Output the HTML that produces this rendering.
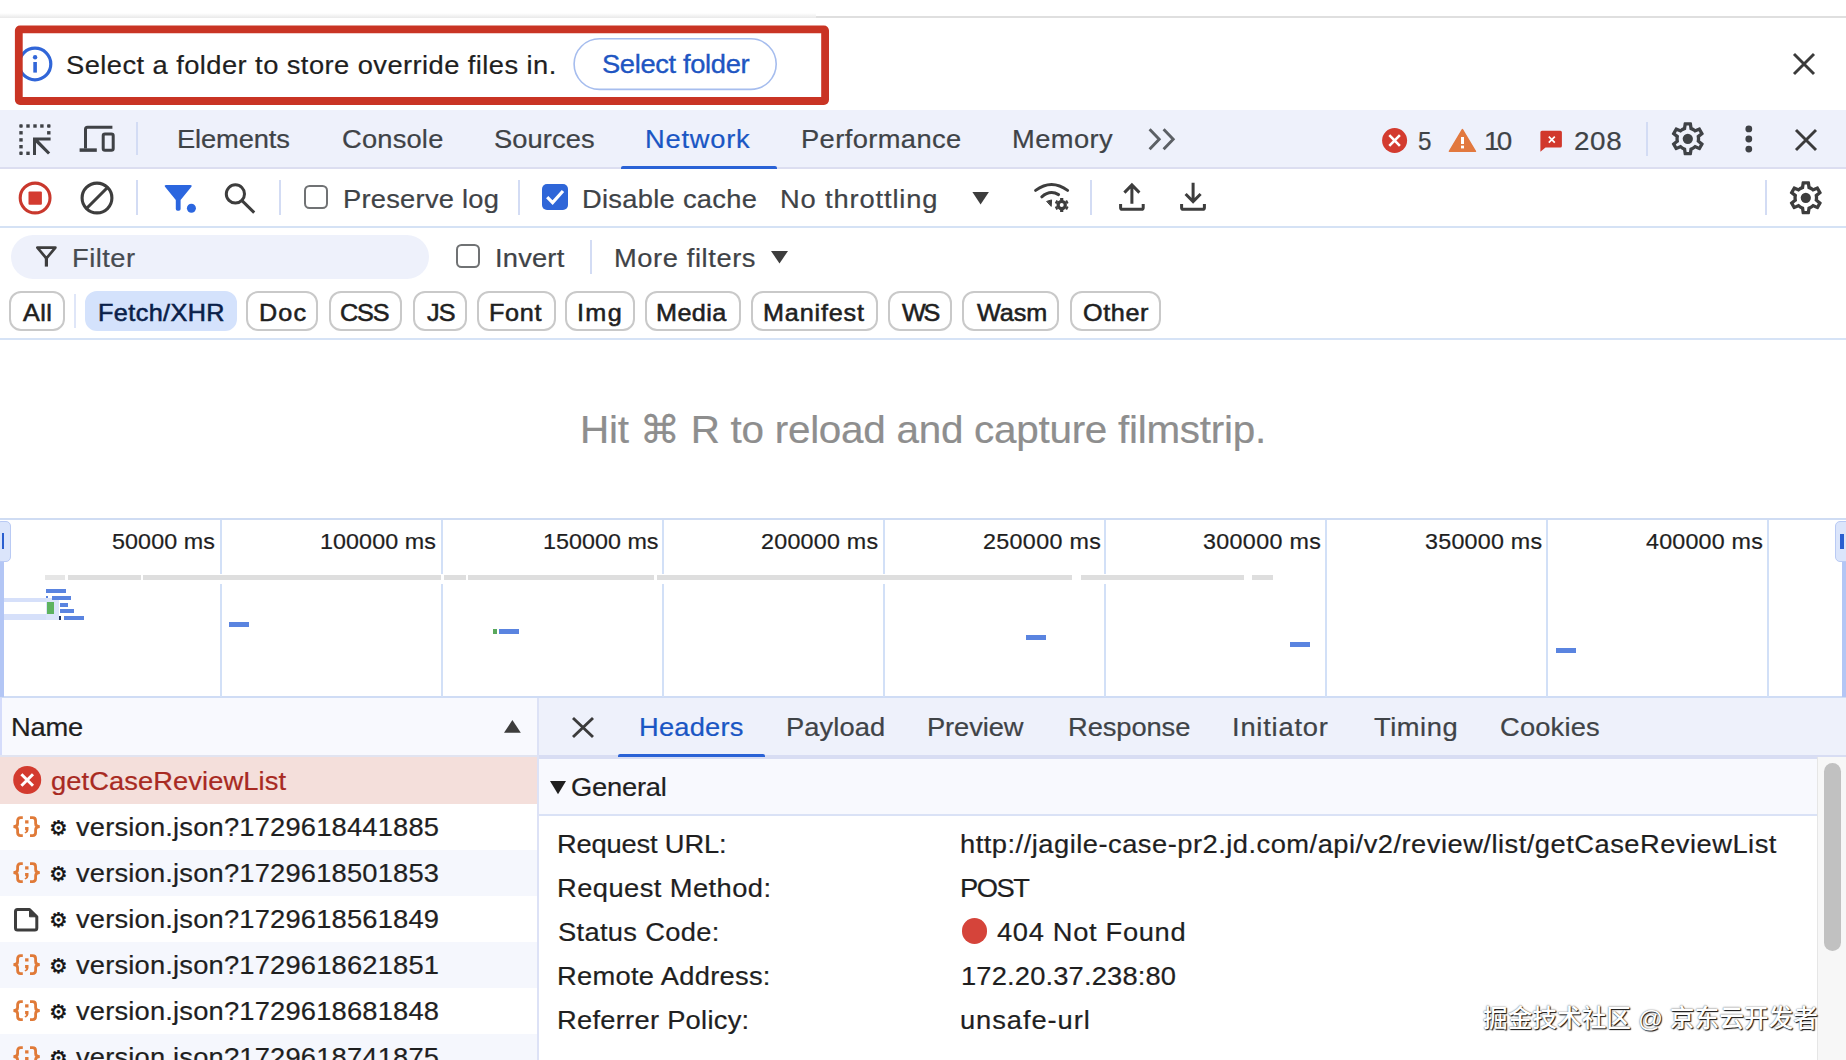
<!DOCTYPE html>
<html lang="en">
<head>
<meta charset="utf-8">
<title>DevTools - Network</title>
<style>
html,body{margin:0;padding:0;background:#fff;}
body{width:1846px;height:1060px;position:relative;overflow:hidden;font-family:"Liberation Sans",sans-serif;}
.a{position:absolute;}
.t{position:absolute;line-height:1;white-space:pre;transform-origin:0 0;}
svg{position:absolute;overflow:visible;}
.sep{position:absolute;width:2px;background:#d3dcf4;}
.chip{position:absolute;top:291.2px;height:36.3px;border:2px solid #c9c9c9;border-radius:12px;background:#fff;}
.gl{position:absolute;top:519.5px;height:177px;width:2px;background:#d2e0f7;}
.bar{position:absolute;background:#5a84e0;}
.row{position:absolute;left:0;width:537px;height:46px;}
.cb{position:absolute;width:20px;height:20px;border:2px solid #707274;border-radius:5.5px;background:#fff;}
</style>
</head>
<body>
<!-- top edge -->
<div class="a" style="left:0;top:12.5px;width:816px;height:5.4px;background:linear-gradient(#fff,#e9e9e9)"></div>
<div class="a" style="left:816px;top:15.9px;width:1030px;height:2px;background:#dfdfdf"></div>

<!-- infobar -->
<div id="infobar" class="a" style="left:0;top:18px;width:1846px;height:92px;background:#fff">
  <svg style="left:16.8px;top:27.9px" width="36" height="36" viewBox="0 0 36 36"><circle cx="18" cy="18" r="15.8" fill="none" stroke="#3166d8" stroke-width="3.2"/><rect x="16.3" y="16" width="3.6" height="10.6" fill="#3166d8"/><circle cx="18.1" cy="11.2" r="2.2" fill="#3166d8"/></svg>
  <svg style="left:570px;top:18px" width="212" height="58" viewBox="0 0 212 58"><rect x="4.1" y="2.8" width="202.1" height="50.6" rx="25.3" fill="#fff" stroke="#a6bdee" stroke-width="1.6"/></svg>
  <svg style="left:1793px;top:35px" width="22" height="22" viewBox="0 0 22 22"><path d="M1 1 L21 21 M21 1 L1 21" stroke="#3b3b3b" stroke-width="2.9" fill="none"/></svg>
</div>
<!-- red annotation rectangle -->
<svg style="left:0;top:0" width="846" height="110" viewBox="0 0 846 110"><rect x="18.8" y="29.3" width="806.3" height="71.7" rx="1.2" fill="none" stroke="#c93424" stroke-width="7.8"/></svg>

<!-- main tab bar -->
<div id="tabbar" class="a" style="left:0;top:110px;width:1846px;height:57px;background:#eef1fb;border-bottom:2px solid #dcdef0">
  <!-- inspect icon -->
  <svg style="left:19px;top:13.5px" width="33" height="32" viewBox="0 0 33 32" fill="#3f4246">
    <rect x="0.3" y="0.3" width="3.4" height="3.4" rx="0.8"/><rect x="7.3" y="0.3" width="3.4" height="3.4"/><rect x="14.3" y="0.3" width="3.4" height="3.4"/><rect x="21.2" y="0.3" width="3.4" height="3.4"/><rect x="28.1" y="0.3" width="3.4" height="3.4" rx="0.8"/>
    <rect x="0.3" y="7.1" width="3.4" height="3.4"/><rect x="0.3" y="14.2" width="3.4" height="3.4"/><rect x="0.3" y="21" width="3.4" height="3.4"/><rect x="0.3" y="27.6" width="3.4" height="3.4" rx="0.8"/>
    <rect x="28.1" y="7.1" width="3.4" height="3.4"/><rect x="7.3" y="27.6" width="3.4" height="3.4"/>
    <path d="M14 13.5 H31.6 V16.6 H19.6 L31.2 28.4 L29 30.6 L17 18.8 V31 H14 Z"/>
  </svg>
  <!-- device icon -->
  <svg style="left:79px;top:15px" width="37" height="28" viewBox="0 0 37 28" fill="none" stroke="#3f4246">
    <path d="M33.4 2.3 H8.5 Q6.5 2.3 6.5 4.3 V23.5" stroke-width="3"/>
    <path d="M0.6 25.1 H17.8" stroke-width="3.5"/>
    <rect x="24.2" y="9" width="10" height="16.3" rx="1.8" stroke-width="3"/>
  </svg>
  <div class="sep" style="left:136.3px;top:12px;height:33px"></div>
  <!-- network tab underline -->
  <div class="a" style="left:620.7px;top:55.5px;width:156.3px;height:3px;background:#2a62d6;border-radius:2px 2px 0 0"></div>
  <!-- chevrons -->
  <svg style="left:1148px;top:18px" width="28" height="23" viewBox="0 0 28 23" fill="none" stroke="#5c6065" stroke-width="2.9"><path d="M1.6 1.2 L11.2 11.2 L1.6 21.2 M15.6 1.2 L25.2 11.2 L15.6 21.2"/></svg>
  <!-- error count icon -->
  <svg style="left:1382px;top:17.8px" width="26" height="26" viewBox="0 0 26 26"><circle cx="12.6" cy="12.5" r="12.5" fill="#d33b2f"/><path d="M7.3 7.2 L17.9 17.8 M17.9 7.2 L7.3 17.8" stroke="#fff" stroke-width="2.6" fill="none"/></svg>
  <!-- warning icon -->
  <svg style="left:1448px;top:18px" width="29" height="25" viewBox="0 0 29 25"><path d="M14.4 1.6 L27.4 23.3 H1.4 Z" fill="#e2793f" stroke="#e2793f" stroke-width="1.6" stroke-linejoin="round"/><rect x="13" y="9" width="3" height="7" fill="#fff"/><rect x="13" y="17.6" width="3" height="2.8" fill="#fff"/></svg>
  <!-- issues icon -->
  <svg style="left:1540px;top:20px" width="23" height="23" viewBox="0 0 23 23"><path d="M2 0.8 H20.4 Q21.9 0.8 21.9 2.3 V16 Q21.9 17.5 20.4 17.5 H5.5 L0.4 21.8 V2.3 Q0.4 0.8 2 0.8 Z" fill="#d1382c"/><path d="M8.8 6.6 L14.8 12.6 M14.8 6.6 L8.8 12.6" stroke="#fff" stroke-width="1.7" fill="none"/></svg>
  <div class="sep" style="left:1645.5px;top:12px;height:33.5px"></div>
  <!-- settings gear -->
  <svg style="left:1668.2px;top:9.2px" width="39.6" height="39.6" viewBox="0 0 24 24" fill="#3f4246"><path d="M19.43 12.98c.04-.32.07-.64.07-.98 0-.34-.03-.66-.07-.98l2.11-1.65c.19-.15.24-.42.12-.64l-2-3.46c-.09-.16-.26-.25-.44-.25-.06 0-.12.01-.17.03l-2.49 1c-.52-.4-1.08-.73-1.69-.98l-.38-2.65C14.46 2.18 14.25 2 14 2h-4c-.25 0-.46.18-.49.42l-.38 2.65c-.61.25-1.17.59-1.69.98l-2.49-1c-.06-.02-.12-.03-.18-.03-.17 0-.34.09-.43.25l-2 3.46c-.13.22-.07.49.12.64l2.11 1.65c-.04.32-.07.65-.07.98 0 .33.03.66.07.98l-2.11 1.65c-.19.15-.24.42-.12.64l2 3.46c.09.16.26.25.44.25.06 0 .12-.01.17-.03l2.49-1c.52.4 1.08.73 1.69.98l.38 2.65c.03.24.24.42.49.42h4c.25 0 .46-.18.49-.42l.38-2.65c.61-.25 1.17-.59 1.69-.98l2.49 1c.06.02.12.03.18.03.17 0 .34-.09.43-.25l2-3.46c.12-.22.07-.49-.12-.64l-2.11-1.65zm-1.98-1.71c.04.31.05.52.05.73 0 .21-.02.43-.05.73l-.14 1.13.89.7 1.08.84-.7 1.21-1.27-.51-1.04-.42-.9.68c-.43.32-.84.56-1.25.73l-1.06.43-.16 1.13-.2 1.35h-1.4l-.19-1.35-.16-1.13-1.06-.43c-.43-.18-.83-.41-1.23-.71l-.91-.7-1.06.43-1.27.51-.7-1.21 1.08-.84.89-.7-.14-1.13c-.03-.31-.05-.54-.05-.74s.02-.43.05-.73l.14-1.13-.89-.7-1.08-.84.7-1.21 1.27.51 1.04.42.9-.68c.43-.32.84-.56 1.25-.73l1.06-.43.16-1.13.2-1.35h1.39l.19 1.35.16 1.13 1.06.43c.43.18.83.41 1.23.71l.91.7 1.06-.43 1.27-.51.7 1.21-1.07.85-.89.7.14 1.13z"/><circle cx="12" cy="12" r="3.1"/></svg>
  <!-- kebab -->
  <svg style="left:1744px;top:15px" width="10" height="28" viewBox="0 0 10 28" fill="#3f4246"><circle cx="4.8" cy="3.9" r="3.4"/><circle cx="4.8" cy="14" r="3.4"/><circle cx="4.8" cy="24.1" r="3.4"/></svg>
  <svg style="left:1795px;top:18.5px" width="22" height="22" viewBox="0 0 22 22"><path d="M1 1 L21 21 M21 1 L1 21" stroke="#3b3b3b" stroke-width="2.9" fill="none"/></svg>
</div>

<!-- network toolbar -->
<div id="toolbar" class="a" style="left:0;top:169px;width:1846px;height:57px;background:#fff;border-bottom:2px solid #d5e2f5">
  <svg style="left:18px;top:12px" width="35" height="35" viewBox="0 0 35 35"><circle cx="17.1" cy="17" r="14.9" fill="none" stroke="#c9382d" stroke-width="3.1"/><rect x="10.5" y="10.4" width="13.4" height="13.3" rx="1" fill="#d43b30"/></svg>
  <svg style="left:80px;top:12px" width="35" height="35" viewBox="0 0 35 35" fill="none" stroke="#3d3d3d" stroke-width="3.1"><circle cx="17" cy="17" r="14.9"/><path d="M6.5 27.5 L27.5 6.5"/></svg>
  <div class="sep" style="left:136.3px;top:11px;height:34.5px"></div>
  <svg style="left:164px;top:15px" width="34" height="30" viewBox="0 0 34 30" fill="#2b66df"><path d="M2.2 1 H26.2 Q28.6 1 27.2 3 L16.6 16 V25 Q16.6 26.8 14.8 26.8 H13.6 Q11.8 26.8 11.8 25 V16 L1.2 3 Q-0.2 1 2.2 1 Z"/><circle cx="27.4" cy="24.3" r="4.5"/></svg>
  <svg style="left:224px;top:13.5px" width="32" height="31" viewBox="0 0 32 31" fill="none" stroke="#3d3d3d" stroke-width="3"><circle cx="11.4" cy="10.9" r="9.1"/><path d="M18 17.6 L30.2 29.6"/></svg>
  <div class="sep" style="left:279.3px;top:11px;height:34.5px"></div>
  <div class="cb" style="left:304.2px;top:16.2px"></div>
  <div class="sep" style="left:518px;top:11px;height:34.5px"></div>
  <div class="a" style="left:542.2px;top:15.2px;width:26px;height:25.4px;border-radius:5px;background:#2f66d8"></div>
  <svg style="left:542.2px;top:15.2px" width="26" height="26" viewBox="0 0 26 26"><path d="M5.2 13.2 L10.6 18.6 L21 7" stroke="#fff" stroke-width="3.2" fill="none"/></svg>
  <svg style="left:972px;top:23.4px" width="17" height="13" viewBox="0 0 17 13"><path d="M0.4 0 H16.9 L8.6 12.4 Z" fill="#3d3d3d"/></svg>
  <!-- network conditions -->
  <svg style="left:1033px;top:12px" width="38" height="32" viewBox="0 0 38 32" fill="none" stroke="#3d3d3d" stroke-width="3" stroke-linecap="round"><path d="M2.6 9.4 Q18.5 -2.4 34.6 9.4"/><path d="M8.8 15.8 Q17 8.6 25.6 13.6"/><path d="M14 20.3 L18.6 18.9 L18.2 25 Z" fill="#3d3d3d" stroke-width="1" stroke-linejoin="round"/><g transform="translate(28.7,24)"><circle r="3.6" stroke-width="3.2"/><path d="M0 -7 V-5 M0 7 V5 M-6.1 -3.5 L-4.3 -2.5 M6.1 3.5 L4.3 2.5 M-6.1 3.5 L-4.3 2.5 M6.1 -3.5 L4.3 -2.5" stroke-width="3.2" stroke-linecap="butt"/></g></svg>
  <div class="sep" style="left:1090px;top:11px;height:34.5px"></div>
  <svg style="left:1118px;top:13px" width="29" height="30" viewBox="0 0 29 30" fill="none" stroke="#3d3d3d" stroke-width="3"><path d="M13.9 21.8 V2.6 M6.4 10.6 L13.9 3 L21.4 10.6"/><path d="M2.6 22 V25.7 Q2.6 27.3 4.2 27.3 H23.6 Q25.2 27.3 25.2 25.7 V22"/></svg>
  <svg style="left:1179px;top:13px" width="29" height="30" viewBox="0 0 29 30" fill="none" stroke="#3d3d3d" stroke-width="3"><path d="M14.1 0.8 V20 M6.6 12 L14.1 19.6 L21.6 12"/><path d="M2.6 22 V25.7 Q2.6 27.3 4.2 27.3 H23.8 Q25.4 27.3 25.4 25.7 V22"/></svg>
  <div class="sep" style="left:1765px;top:11px;height:34.5px"></div>
  <svg style="left:1786.2px;top:9.2px" width="39.6" height="39.6" viewBox="0 0 24 24" fill="#3d3d3d"><path d="M19.43 12.98c.04-.32.07-.64.07-.98 0-.34-.03-.66-.07-.98l2.11-1.65c.19-.15.24-.42.12-.64l-2-3.46c-.09-.16-.26-.25-.44-.25-.06 0-.12.01-.17.03l-2.49 1c-.52-.4-1.08-.73-1.69-.98l-.38-2.65C14.46 2.18 14.25 2 14 2h-4c-.25 0-.46.18-.49.42l-.38 2.65c-.61.25-1.17.59-1.69.98l-2.49-1c-.06-.02-.12-.03-.18-.03-.17 0-.34.09-.43.25l-2 3.46c-.13.22-.07.49.12.64l2.11 1.65c-.04.32-.07.65-.07.98 0 .33.03.66.07.98l-2.11 1.65c-.19.15-.24.42-.12.64l2 3.46c.09.16.26.25.44.25.06 0 .12-.01.17-.03l2.49-1c.52.4 1.08.73 1.69.98l.38 2.65c.03.24.24.42.49.42h4c.25 0 .46-.18.49-.42l.38-2.65c.61-.25 1.17-.59 1.69-.98l2.49 1c.06.02.12.03.18.03.17 0 .34-.09.43-.25l2-3.46c.12-.22.07-.49-.12-.64l-2.11-1.65zm-1.98-1.71c.04.31.05.52.05.73 0 .21-.02.43-.05.73l-.14 1.13.89.7 1.08.84-.7 1.21-1.27-.51-1.04-.42-.9.68c-.43.32-.84.56-1.25.73l-1.06.43-.16 1.13-.2 1.35h-1.4l-.19-1.35-.16-1.13-1.06-.43c-.43-.18-.83-.41-1.23-.71l-.91-.7-1.06.43-1.27.51-.7-1.21 1.08-.84.89-.7-.14-1.13c-.03-.31-.05-.54-.05-.74s.02-.43.05-.73l.14-1.13-.89-.7-1.08-.84.7-1.21 1.27.51 1.04.42.9-.68c.43-.32.84-.56 1.25-.73l1.06-.43.16-1.13.2-1.35h1.39l.19 1.35.16 1.13 1.06.43c.43.18.83.41 1.23.71l.91.7 1.06-.43 1.27-.51.7 1.21-1.07.85-.89.7.14 1.13z"/><circle cx="12" cy="12" r="3.1"/></svg>
</div>

<!-- filter row -->
<div id="filterrow" class="a" style="left:0;top:228.6px;width:1846px;height:57px;background:#fff">
  <div class="a" style="left:11px;top:6.6px;width:418px;height:43.4px;border-radius:22px;background:#eef1fb"></div>
  <svg style="left:35px;top:17.5px" width="24" height="22" viewBox="0 0 24 22" fill="none" stroke="#3d3d3d" stroke-width="2.7" stroke-linejoin="round"><path d="M2.4 1.6 H20.4 L11.4 12.4 Z"/><path d="M11.4 11 V20.6" stroke-width="3.2"/></svg>
  <div class="cb" style="left:456.3px;top:15.5px"></div>
  <div class="sep" style="left:589.8px;top:11px;height:34.5px"></div>
  <svg style="left:771px;top:22.7px" width="17" height="13" viewBox="0 0 17 13"><path d="M0 0 H17 L8.5 12.4 Z" fill="#3d3d3d"/></svg>
</div>

<!-- type chips -->
<div id="chips" class="a" style="left:0;top:0;width:0;height:0">
  <div class="chip" style="left:9.2px;width:51.6px"></div>
  <div class="sep" style="left:74.2px;top:294.2px;height:34px;background:#dfe6f8"></div>
  <div class="chip" style="left:85px;width:147.8px;border-color:#d4e2fc;background:#d4e2fc"></div>
  <div class="chip" style="left:246.2px;width:67.8px"></div>
  <div class="chip" style="left:328.5px;width:69.9px"></div>
  <div class="chip" style="left:412.5px;width:50.5px"></div>
  <div class="chip" style="left:477px;width:75.0px"></div>
  <div class="chip" style="left:565px;width:65.6px"></div>
  <div class="chip" style="left:644.6px;width:92.8px"></div>
  <div class="chip" style="left:750.5px;width:123.5px"></div>
  <div class="chip" style="left:887.5px;width:60.8px"></div>
  <div class="chip" style="left:962.4px;width:93.1px"></div>
  <div class="chip" style="left:1069.6px;width:87.7px"></div>
</div>
<div class="a" style="left:0;top:338px;width:1846px;height:2px;background:#d6e3f6"></div>
<!-- overview timeline -->
<div id="overview" class="a" style="left:0;top:0;width:0;height:0">
  <div class="a" style="left:0;top:518px;width:1846px;height:2px;background:#cfdcf3"></div>
  <div class="a" style="left:0;top:695.8px;width:1846px;height:2px;background:#cfdcf5"></div>
  <div class="gl" style="left:220px"></div><div class="gl" style="left:441px"></div><div class="gl" style="left:662px"></div><div class="gl" style="left:883px"></div><div class="gl" style="left:1104px"></div><div class="gl" style="left:1325px"></div><div class="gl" style="left:1546px"></div><div class="gl" style="left:1767px"></div>
  <!-- grey request track -->
  <div class="a" style="left:43px;top:573.5px;width:1232px;height:10px;background:#fff"></div>
  <div class="a" style="left:44.8px;top:574.6px;width:20px;height:5.4px;background:#e6e6e6"></div>
  <div class="a" style="left:67.8px;top:574.6px;width:73px;height:5.4px;background:#dedede"></div>
  <div class="a" style="left:142.8px;top:574.6px;width:298px;height:5.4px;background:#dedede"></div>
  <div class="a" style="left:443.5px;top:574.6px;width:22px;height:5.4px;background:#dedede"></div>
  <div class="a" style="left:467.5px;top:574.6px;width:186px;height:5.4px;background:#dedede"></div>
  <div class="a" style="left:656.5px;top:574.6px;width:415.5px;height:5.4px;background:#dedede"></div>
  <div class="a" style="left:1080.5px;top:574.6px;width:163.5px;height:5.4px;background:#dedede"></div>
  <div class="a" style="left:1252px;top:574.6px;width:21px;height:5.4px;background:#dedede"></div>
  <!-- selection window handles -->
  <div class="a" style="left:0;top:561px;width:3.7px;height:136px;background:#b3c6f5"></div>
  <div class="a" style="left:1842px;top:561px;width:4px;height:136px;background:#b3c6f5"></div>
  <div class="a" style="left:4px;top:598.4px;width:44px;height:3.6px;background:#d6e0fa"></div>
  <div class="a" style="left:4px;top:614px;width:44px;height:5.6px;background:#d6e0fa"></div>
  <div class="a" style="left:-4px;top:520.5px;width:13px;height:39px;border:1.5px solid #b9caf4;border-radius:5px;background:#dbe5fb"></div>
  <div class="a" style="left:2px;top:533px;width:2px;height:15.6px;background:#2a5fcf"></div>
  <div class="a" style="left:1835.3px;top:520.5px;width:14px;height:39px;border:1.5px solid #b9caf4;border-radius:5px;background:#dbe5fb"></div>
  <div class="a" style="left:1840px;top:533.7px;width:3.6px;height:15px;background:#2a5fcf"></div>
  <!-- request bars -->
  <div class="bar" style="left:45.6px;top:589.2px;width:20.4px;height:3.6px"></div>
  <div class="a" style="left:46px;top:598px;width:13px;height:22px;background:#dbe5fa"></div>
  <div class="bar" style="left:46px;top:596px;width:2px;height:2px"></div>
  <div class="bar" style="left:51.5px;top:596px;width:19.5px;height:3.6px"></div>
  <div class="bar" style="left:59.8px;top:603.4px;width:8.2px;height:3.4px"></div>
  <div class="bar" style="left:59.8px;top:609.4px;width:14.2px;height:3.6px"></div>
  <div class="bar" style="left:64.3px;top:616px;width:20px;height:4px"></div>
  <div class="a" style="left:59.4px;top:616px;width:2px;height:4px;background:#22345e"></div>
  <div class="a" style="left:47px;top:602.3px;width:7.2px;height:11.4px;background:#5db35f"></div>
  <div class="bar" style="left:229.3px;top:622px;width:20px;height:5px"></div>
  <div class="a" style="left:492.8px;top:628.8px;width:4.5px;height:5px;background:#5aa85c"></div>
  <div class="bar" style="left:499px;top:628.8px;width:20.2px;height:5px"></div>
  <div class="bar" style="left:1025.5px;top:635px;width:20.5px;height:5px"></div>
  <div class="bar" style="left:1289.5px;top:641.5px;width:20.5px;height:5px"></div>
  <div class="bar" style="left:1556px;top:648.3px;width:20px;height:5px"></div>
</div>
<!-- request list (left) -->
<div id="reqlist" class="a" style="left:0;top:697.8px;width:537px;height:363px;background:#fff">
  <div class="a" style="left:0;top:0;width:537px;height:57px;background:#f8f9fe;border-bottom:2px solid #e1e4f1"></div>
  <div class="a" style="left:0;top:0;width:2px;height:57px;background:#d5dcfb"></div>
  <svg style="left:504.3px;top:22.2px" width="17" height="13" viewBox="0 0 17 13"><path d="M8.4 0 L16.8 12.8 H0 Z" fill="#3d3d3d"/></svg>
  <div class="row" style="top:59px;height:46.9px;background:#f4dfdb"></div>
  <div class="row" style="top:152.5px;background:#f5f7fd"></div>
  <div class="row" style="top:244.5px;background:#f5f7fd"></div>
  <div class="row" style="top:336.5px;background:#f5f7fd"></div>
  <svg style="left:12.5px;top:68.7px" width="29" height="29" viewBox="0 0 29 29"><circle cx="14.2" cy="14" r="14" fill="#d33b2f"/><path d="M8.4 8.2 L20 19.8 M20 8.2 L8.4 19.8" stroke="#fff" stroke-width="3" fill="none"/></svg>
</div>
<!-- row icons -->
<svg style="left:12px;top:816px" width="30" height="22"><g fill="none" stroke="#e07a38" stroke-width="2.8"><path d="M10.8 1.7 H8.6 Q5.6 1.7 5.6 4.7 V7.4 Q5.6 10.6 1.4 10.6 Q5.6 10.6 5.6 13.8 V16.6 Q5.6 19.6 8.6 19.6 H10.8"/><path d="M18 1.7 H20.6 Q23.6 1.7 23.6 4.7 V7.4 Q23.6 10.6 27.8 10.6 Q23.6 10.6 23.6 13.8 V16.6 Q23.6 19.6 20.6 19.6 H18"/><rect x="13.1" y="4.3" width="3.4" height="3.2" fill="#e07a38" stroke="none"/><path d="M13.1 11 H16.5 V14 Q16.5 16.4 13.6 17.6 L12.4 16.4 Q14.4 15.4 14.2 14.2 H13.1 Z" fill="#e07a38" stroke="none"/></g></svg>
<svg style="left:12px;top:862px" width="30" height="22"><g fill="none" stroke="#e07a38" stroke-width="2.8"><path d="M10.8 1.7 H8.6 Q5.6 1.7 5.6 4.7 V7.4 Q5.6 10.6 1.4 10.6 Q5.6 10.6 5.6 13.8 V16.6 Q5.6 19.6 8.6 19.6 H10.8"/><path d="M18 1.7 H20.6 Q23.6 1.7 23.6 4.7 V7.4 Q23.6 10.6 27.8 10.6 Q23.6 10.6 23.6 13.8 V16.6 Q23.6 19.6 20.6 19.6 H18"/><rect x="13.1" y="4.3" width="3.4" height="3.2" fill="#e07a38" stroke="none"/><path d="M13.1 11 H16.5 V14 Q16.5 16.4 13.6 17.6 L12.4 16.4 Q14.4 15.4 14.2 14.2 H13.1 Z" fill="#e07a38" stroke="none"/></g></svg>
<svg style="left:14.2px;top:907.6px" width="25" height="24"><g fill="none" stroke="#3d3d3d" stroke-width="3" stroke-linejoin="round"><path d="M3.5 1.5 H15.5 L22.8 8.8 V20 Q22.8 22 20.8 22 H3.5 Q1.5 22 1.5 20 V3.5 Q1.5 1.5 3.5 1.5 Z"/><path d="M15.5 1.5 V8.8 H22.8 Z" fill="#3d3d3d" stroke-width="1"/></g></svg>
<svg style="left:12px;top:954px" width="30" height="22"><g fill="none" stroke="#e07a38" stroke-width="2.8"><path d="M10.8 1.7 H8.6 Q5.6 1.7 5.6 4.7 V7.4 Q5.6 10.6 1.4 10.6 Q5.6 10.6 5.6 13.8 V16.6 Q5.6 19.6 8.6 19.6 H10.8"/><path d="M18 1.7 H20.6 Q23.6 1.7 23.6 4.7 V7.4 Q23.6 10.6 27.8 10.6 Q23.6 10.6 23.6 13.8 V16.6 Q23.6 19.6 20.6 19.6 H18"/><rect x="13.1" y="4.3" width="3.4" height="3.2" fill="#e07a38" stroke="none"/><path d="M13.1 11 H16.5 V14 Q16.5 16.4 13.6 17.6 L12.4 16.4 Q14.4 15.4 14.2 14.2 H13.1 Z" fill="#e07a38" stroke="none"/></g></svg>
<svg style="left:12px;top:1000px" width="30" height="22"><g fill="none" stroke="#e07a38" stroke-width="2.8"><path d="M10.8 1.7 H8.6 Q5.6 1.7 5.6 4.7 V7.4 Q5.6 10.6 1.4 10.6 Q5.6 10.6 5.6 13.8 V16.6 Q5.6 19.6 8.6 19.6 H10.8"/><path d="M18 1.7 H20.6 Q23.6 1.7 23.6 4.7 V7.4 Q23.6 10.6 27.8 10.6 Q23.6 10.6 23.6 13.8 V16.6 Q23.6 19.6 20.6 19.6 H18"/><rect x="13.1" y="4.3" width="3.4" height="3.2" fill="#e07a38" stroke="none"/><path d="M13.1 11 H16.5 V14 Q16.5 16.4 13.6 17.6 L12.4 16.4 Q14.4 15.4 14.2 14.2 H13.1 Z" fill="#e07a38" stroke="none"/></g></svg>
<svg style="left:12px;top:1046px" width="30" height="22"><g fill="none" stroke="#e07a38" stroke-width="2.8"><path d="M10.8 1.7 H8.6 Q5.6 1.7 5.6 4.7 V7.4 Q5.6 10.6 1.4 10.6 Q5.6 10.6 5.6 13.8 V16.6 Q5.6 19.6 8.6 19.6 H10.8"/><path d="M18 1.7 H20.6 Q23.6 1.7 23.6 4.7 V7.4 Q23.6 10.6 27.8 10.6 Q23.6 10.6 23.6 13.8 V16.6 Q23.6 19.6 20.6 19.6 H18"/><rect x="13.1" y="4.3" width="3.4" height="3.2" fill="#e07a38" stroke="none"/><path d="M13.1 11 H16.5 V14 Q16.5 16.4 13.6 17.6 L12.4 16.4 Q14.4 15.4 14.2 14.2 H13.1 Z" fill="#e07a38" stroke="none"/></g></svg>

<!-- splitter -->
<div class="a" style="left:537px;top:697.8px;width:2px;height:363px;background:#dde2f6"></div>

<!-- details panel (right) -->
<div id="details" class="a" style="left:539px;top:697.8px;width:1307px;height:363px;background:#fff">
  <div class="a" style="left:0;top:0;width:1307px;height:56.8px;background:#eef1fb;border-bottom:4px solid #d8ddf3"></div>
  <svg style="left:33px;top:19.4px" width="22" height="21" viewBox="0 0 22 21"><path d="M1 1 L21 20 M21 1 L1 20" stroke="#3b3b3b" stroke-width="2.9" fill="none"/></svg>
  <div class="a" style="left:79px;top:56.2px;width:146.7px;height:3px;background:#2a62d6;border-radius:2px 2px 0 0"></div>
  <div class="a" style="left:0;top:60.8px;width:1278px;height:55.5px;background:#f8f9fe;border-bottom:2px solid #dae2f6"></div>
  <svg style="left:11px;top:83.3px" width="16" height="14" viewBox="0 0 16 14"><path d="M0 0 H16 L8 13.3 Z" fill="#1f1f1f"/></svg>
  <div class="a" style="left:422.5px;top:220.7px;width:25.5px;height:25.5px;border-radius:50%;background:#d5443a"></div>
  <!-- scrollbar -->
  <div class="a" style="left:1278px;top:59.6px;width:29px;height:304px;background:#f7f7f7;border-left:1.5px solid #e6e6e6"></div>
  <div class="a" style="left:1284.8px;top:64.8px;width:17.2px;height:188px;border-radius:9px;background:#c1c1c1"></div>
</div>

<span class="t" style="left:66.2px;top:52.0px;font-size:26.00px;color:#1f1f1f;letter-spacing:0.417px;transform:scaleX(1.0500);-webkit-text-stroke:0.22px currentColor;">Select a folder to store override files in.</span>
<span class="t" style="left:601.5px;top:50.5px;font-size:26.00px;color:#2055c2;letter-spacing:-0.329px;transform:scaleX(1.0500);-webkit-text-stroke:0.35px currentColor;">Select folder</span>
<span class="t" style="left:177.2px;top:126.1px;font-size:26.00px;color:#3f4347;letter-spacing:-0.122px;transform:scaleX(1.0500);-webkit-text-stroke:0.22px currentColor;">Elements</span>
<span class="t" style="left:342.4px;top:126.1px;font-size:26.00px;color:#3f4347;letter-spacing:0.183px;transform:scaleX(1.0500);-webkit-text-stroke:0.22px currentColor;">Console</span>
<span class="t" style="left:493.8px;top:126.1px;font-size:26.00px;color:#3f4347;letter-spacing:0.079px;transform:scaleX(1.0500);-webkit-text-stroke:0.22px currentColor;">Sources</span>
<span class="t" style="left:644.7px;top:126.1px;font-size:26.00px;color:#1a56c4;letter-spacing:0.722px;transform:scaleX(1.0500);-webkit-text-stroke:0.22px currentColor;">Network</span>
<span class="t" style="left:801.2px;top:126.1px;font-size:26.00px;color:#3f4347;letter-spacing:0.371px;transform:scaleX(1.0500);-webkit-text-stroke:0.22px currentColor;">Performance</span>
<span class="t" style="left:1012.2px;top:126.1px;font-size:26.00px;color:#3f4347;letter-spacing:0.400px;transform:scaleX(1.0500);-webkit-text-stroke:0.22px currentColor;">Memory</span>
<span class="t" style="left:1417.9px;top:128.1px;font-size:26.50px;color:#3f4347;transform:scaleX(0.9154);-webkit-text-stroke:0.22px currentColor;">5</span>
<span class="t" style="left:1483.9px;top:128.1px;font-size:26.50px;color:#3f4347;letter-spacing:-2.619px;transform:scaleX(1.0500);-webkit-text-stroke:0.22px currentColor;">10</span>
<span class="t" style="left:1573.5px;top:128.1px;font-size:26.50px;color:#3f4347;letter-spacing:0.571px;transform:scaleX(1.0500);-webkit-text-stroke:0.22px currentColor;">208</span>
<span class="t" style="left:343.4px;top:186.1px;font-size:26.00px;color:#3f4347;letter-spacing:0.234px;transform:scaleX(1.0500);-webkit-text-stroke:0.22px currentColor;">Preserve log</span>
<span class="t" style="left:581.7px;top:186.1px;font-size:26.00px;color:#3f4347;letter-spacing:0.270px;transform:scaleX(1.0500);-webkit-text-stroke:0.22px currentColor;">Disable cache</span>
<span class="t" style="left:779.8px;top:186.1px;font-size:26.00px;color:#3f4347;letter-spacing:0.813px;transform:scaleX(1.0500);-webkit-text-stroke:0.22px currentColor;">No throttling</span>
<span class="t" style="left:72.4px;top:245.2px;font-size:26.00px;color:#474b50;letter-spacing:0.448px;transform:scaleX(1.0500);-webkit-text-stroke:0.22px currentColor;">Filter</span>
<span class="t" style="left:495.4px;top:245.2px;font-size:26.00px;color:#3f4347;letter-spacing:0.181px;transform:scaleX(1.0500);-webkit-text-stroke:0.22px currentColor;">Invert</span>
<span class="t" style="left:613.6px;top:245.2px;font-size:26.00px;color:#3f4347;letter-spacing:0.563px;transform:scaleX(1.0500);-webkit-text-stroke:0.22px currentColor;">More filters</span>
<span class="t" style="left:23.4px;top:300.8px;font-size:24.00px;color:#1f1f1f;letter-spacing:0.357px;transform:scaleX(1.0500);-webkit-text-stroke:0.55px currentColor;">All</span>
<span class="t" style="left:98.3px;top:300.8px;font-size:24.00px;color:#0a1f4a;letter-spacing:0.393px;transform:scaleX(1.0500);-webkit-text-stroke:0.55px currentColor;">Fetch/XHR</span>
<span class="t" style="left:258.7px;top:300.8px;font-size:24.00px;color:#1f1f1f;letter-spacing:1.048px;transform:scaleX(1.0500);-webkit-text-stroke:0.55px currentColor;">Doc</span>
<span class="t" style="left:340.4px;top:300.8px;font-size:24.00px;color:#1f1f1f;letter-spacing:-1.048px;transform:scaleX(1.0500);-webkit-text-stroke:0.55px currentColor;">CSS</span>
<span class="t" style="left:426.5px;top:300.8px;font-size:24.00px;color:#1f1f1f;letter-spacing:-0.810px;transform:scaleX(1.0500);-webkit-text-stroke:0.55px currentColor;">JS</span>
<span class="t" style="left:489.4px;top:300.8px;font-size:24.00px;color:#1f1f1f;letter-spacing:0.635px;transform:scaleX(1.0500);-webkit-text-stroke:0.55px currentColor;">Font</span>
<span class="t" style="left:577.4px;top:300.8px;font-size:24.00px;color:#1f1f1f;letter-spacing:1.262px;transform:scaleX(1.0500);-webkit-text-stroke:0.55px currentColor;">Img</span>
<span class="t" style="left:656.4px;top:300.8px;font-size:24.00px;color:#1f1f1f;letter-spacing:0.381px;transform:scaleX(1.0500);-webkit-text-stroke:0.55px currentColor;">Media</span>
<span class="t" style="left:763.4px;top:300.8px;font-size:24.00px;color:#1f1f1f;letter-spacing:0.782px;transform:scaleX(1.0500);-webkit-text-stroke:0.55px currentColor;">Manifest</span>
<span class="t" style="left:902.1px;top:300.8px;font-size:24.00px;color:#1f1f1f;letter-spacing:-2.286px;transform:scaleX(1.0500);-webkit-text-stroke:0.55px currentColor;">WS</span>
<span class="t" style="left:977.0px;top:300.8px;font-size:24.00px;color:#1f1f1f;letter-spacing:-0.095px;transform:scaleX(1.0500);-webkit-text-stroke:0.55px currentColor;">Wasm</span>
<span class="t" style="left:1082.5px;top:300.8px;font-size:24.00px;color:#1f1f1f;letter-spacing:0.560px;transform:scaleX(1.0500);-webkit-text-stroke:0.55px currentColor;">Other</span>
<span class="t" style="left:580.4px;top:411.2px;font-size:38.50px;color:#8e8e8e;letter-spacing:-0.253px;transform:scaleX(1.0500);font-family:'Liberation Sans','DejaVu Sans',sans-serif;-webkit-text-stroke:0.22px currentColor;">Hit ⌘ R to reload and capture filmstrip.</span>
<span class="t" style="left:112.2px;top:531.0px;font-size:22.20px;color:#1f1f1f;letter-spacing:0.082px;transform:scaleX(1.0500);-webkit-text-stroke:0.22px currentColor;">50000 ms</span>
<span class="t" style="left:320.4px;top:531.0px;font-size:22.20px;color:#1f1f1f;letter-spacing:0.077px;transform:scaleX(1.0500);-webkit-text-stroke:0.22px currentColor;">100000 ms</span>
<span class="t" style="left:542.6px;top:531.0px;font-size:22.20px;color:#1f1f1f;letter-spacing:0.030px;transform:scaleX(1.0500);-webkit-text-stroke:0.22px currentColor;">150000 ms</span>
<span class="t" style="left:761.0px;top:531.0px;font-size:22.20px;color:#1f1f1f;letter-spacing:0.226px;transform:scaleX(1.0500);-webkit-text-stroke:0.22px currentColor;">200000 ms</span>
<span class="t" style="left:982.5px;top:531.0px;font-size:22.20px;color:#1f1f1f;letter-spacing:0.310px;transform:scaleX(1.0500);-webkit-text-stroke:0.22px currentColor;">250000 ms</span>
<span class="t" style="left:1202.5px;top:531.0px;font-size:22.20px;color:#1f1f1f;letter-spacing:0.310px;transform:scaleX(1.0500);-webkit-text-stroke:0.22px currentColor;">300000 ms</span>
<span class="t" style="left:1425.4px;top:531.0px;font-size:22.20px;color:#1f1f1f;letter-spacing:0.226px;transform:scaleX(1.0500);-webkit-text-stroke:0.22px currentColor;">350000 ms</span>
<span class="t" style="left:1645.5px;top:531.0px;font-size:22.20px;color:#1f1f1f;letter-spacing:0.185px;transform:scaleX(1.0500);-webkit-text-stroke:0.22px currentColor;">400000 ms</span>
<span class="t" style="left:11.2px;top:714.2px;font-size:26.00px;color:#1f1f1f;letter-spacing:-0.222px;transform:scaleX(1.0500);-webkit-text-stroke:0.22px currentColor;">Name</span>
<span class="t" style="left:51.4px;top:768.1px;font-size:26.00px;color:#a82a22;letter-spacing:0.080px;transform:scaleX(1.0500);-webkit-text-stroke:0.22px currentColor;">getCaseReviewList</span>
<span class="t" style="left:75.6px;top:813.6px;font-size:26.00px;color:#1f1f1f;letter-spacing:0.179px;transform:scaleX(1.0500);-webkit-text-stroke:0.22px currentColor;">version.json?1729618441885</span>
<span class="t" style="left:75.6px;top:859.6px;font-size:26.00px;color:#1f1f1f;letter-spacing:0.179px;transform:scaleX(1.0500);-webkit-text-stroke:0.22px currentColor;">version.json?1729618501853</span>
<span class="t" style="left:75.6px;top:905.6px;font-size:26.00px;color:#1f1f1f;letter-spacing:0.179px;transform:scaleX(1.0500);-webkit-text-stroke:0.22px currentColor;">version.json?1729618561849</span>
<span class="t" style="left:75.6px;top:951.6px;font-size:26.00px;color:#1f1f1f;letter-spacing:0.179px;transform:scaleX(1.0500);-webkit-text-stroke:0.22px currentColor;">version.json?1729618621851</span>
<span class="t" style="left:75.6px;top:997.6px;font-size:26.00px;color:#1f1f1f;letter-spacing:0.179px;transform:scaleX(1.0500);-webkit-text-stroke:0.22px currentColor;">version.json?1729618681848</span>
<span class="t" style="left:75.6px;top:1043.6px;font-size:26.00px;color:#1f1f1f;letter-spacing:0.179px;transform:scaleX(1.0500);-webkit-text-stroke:0.22px currentColor;">version.json?1729618741875</span>
<span class="t" style="left:639.1px;top:714.0px;font-size:26.00px;color:#1a56c4;letter-spacing:0.198px;transform:scaleX(1.0500);-webkit-text-stroke:0.22px currentColor;">Headers</span>
<span class="t" style="left:786.4px;top:714.0px;font-size:26.00px;color:#3f4347;letter-spacing:0.079px;transform:scaleX(1.0500);-webkit-text-stroke:0.22px currentColor;">Payload</span>
<span class="t" style="left:927.0px;top:714.0px;font-size:26.00px;color:#3f4347;letter-spacing:-0.103px;transform:scaleX(1.0500);-webkit-text-stroke:0.22px currentColor;">Preview</span>
<span class="t" style="left:1067.8px;top:714.0px;font-size:26.00px;color:#3f4347;letter-spacing:-0.082px;transform:scaleX(1.0500);-webkit-text-stroke:0.22px currentColor;">Response</span>
<span class="t" style="left:1232.2px;top:714.0px;font-size:26.00px;color:#3f4347;letter-spacing:0.756px;transform:scaleX(1.0500);-webkit-text-stroke:0.22px currentColor;">Initiator</span>
<span class="t" style="left:1373.5px;top:714.0px;font-size:26.00px;color:#3f4347;letter-spacing:0.524px;transform:scaleX(1.0500);-webkit-text-stroke:0.22px currentColor;">Timing</span>
<span class="t" style="left:1499.9px;top:714.0px;font-size:26.00px;color:#3f4347;letter-spacing:0.159px;transform:scaleX(1.0500);-webkit-text-stroke:0.22px currentColor;">Cookies</span>
<span class="t" style="left:571.2px;top:773.7px;font-size:26.00px;color:#1f1f1f;letter-spacing:-0.206px;transform:scaleX(1.0500);-webkit-text-stroke:0.22px currentColor;">General</span>
<span class="t" style="left:556.6px;top:831.0px;font-size:26.00px;color:#1f1f1f;letter-spacing:-0.169px;transform:scaleX(1.0500);-webkit-text-stroke:0.22px currentColor;">Request URL:</span>
<span class="t" style="left:556.6px;top:875.0px;font-size:26.00px;color:#1f1f1f;letter-spacing:0.415px;transform:scaleX(1.0500);-webkit-text-stroke:0.22px currentColor;">Request Method:</span>
<span class="t" style="left:557.7px;top:919.0px;font-size:26.00px;color:#1f1f1f;letter-spacing:0.299px;transform:scaleX(1.0500);-webkit-text-stroke:0.22px currentColor;">Status Code:</span>
<span class="t" style="left:556.6px;top:963.0px;font-size:26.00px;color:#1f1f1f;letter-spacing:0.276px;transform:scaleX(1.0500);-webkit-text-stroke:0.22px currentColor;">Remote Address:</span>
<span class="t" style="left:556.6px;top:1007.0px;font-size:26.00px;color:#1f1f1f;letter-spacing:0.257px;transform:scaleX(1.0500);-webkit-text-stroke:0.22px currentColor;">Referrer Policy:</span>
<span class="t" style="left:960.1px;top:831.0px;font-size:26.00px;color:#1f1f1f;letter-spacing:0.468px;transform:scaleX(1.0500);-webkit-text-stroke:0.22px currentColor;">http://jagile-case-pr2.jd.com/api/v2/review/list/getCaseReviewList</span>
<span class="t" style="left:960.4px;top:875.0px;font-size:26.00px;color:#1f1f1f;letter-spacing:-1.413px;transform:scaleX(1.0500);-webkit-text-stroke:0.22px currentColor;">POST</span>
<span class="t" style="left:996.5px;top:919.0px;font-size:26.00px;color:#1f1f1f;letter-spacing:0.639px;transform:scaleX(1.0500);-webkit-text-stroke:0.22px currentColor;">404 Not Found</span>
<span class="t" style="left:960.9px;top:963.0px;font-size:26.00px;color:#1f1f1f;letter-spacing:0.159px;transform:scaleX(1.0500);-webkit-text-stroke:0.22px currentColor;">172.20.37.238:80</span>
<span class="t" style="left:959.9px;top:1007.0px;font-size:26.00px;color:#1f1f1f;letter-spacing:0.889px;transform:scaleX(1.0500);-webkit-text-stroke:0.22px currentColor;">unsafe-url</span>
<span class="t" style="left:49.2px;top:818.0px;font-size:20.30px;color:#111;font-family:'DejaVu Sans',sans-serif;-webkit-text-stroke:0.5px #111;">⚙</span>
<span class="t" style="left:49.2px;top:864.0px;font-size:20.30px;color:#111;font-family:'DejaVu Sans',sans-serif;-webkit-text-stroke:0.5px #111;">⚙</span>
<span class="t" style="left:49.2px;top:910.0px;font-size:20.30px;color:#111;font-family:'DejaVu Sans',sans-serif;-webkit-text-stroke:0.5px #111;">⚙</span>
<span class="t" style="left:49.2px;top:956.0px;font-size:20.30px;color:#111;font-family:'DejaVu Sans',sans-serif;-webkit-text-stroke:0.5px #111;">⚙</span>
<span class="t" style="left:49.2px;top:1002.0px;font-size:20.30px;color:#111;font-family:'DejaVu Sans',sans-serif;-webkit-text-stroke:0.5px #111;">⚙</span>
<span class="t" style="left:49.2px;top:1048.0px;font-size:20.30px;color:#111;font-family:'DejaVu Sans',sans-serif;-webkit-text-stroke:0.5px #111;">⚙</span>
<span class="t" style="left:1483.0px;top:1006.8px;font-size:24.68px;color:#fff;font-family:'Liberation Sans','Noto Sans CJK SC',sans-serif;font-weight:500;text-shadow:1px 1px 1px #111,0 0 1.5px #444;">掘金技术社区 @ 京东云开发者</span>
</body>
</html>
